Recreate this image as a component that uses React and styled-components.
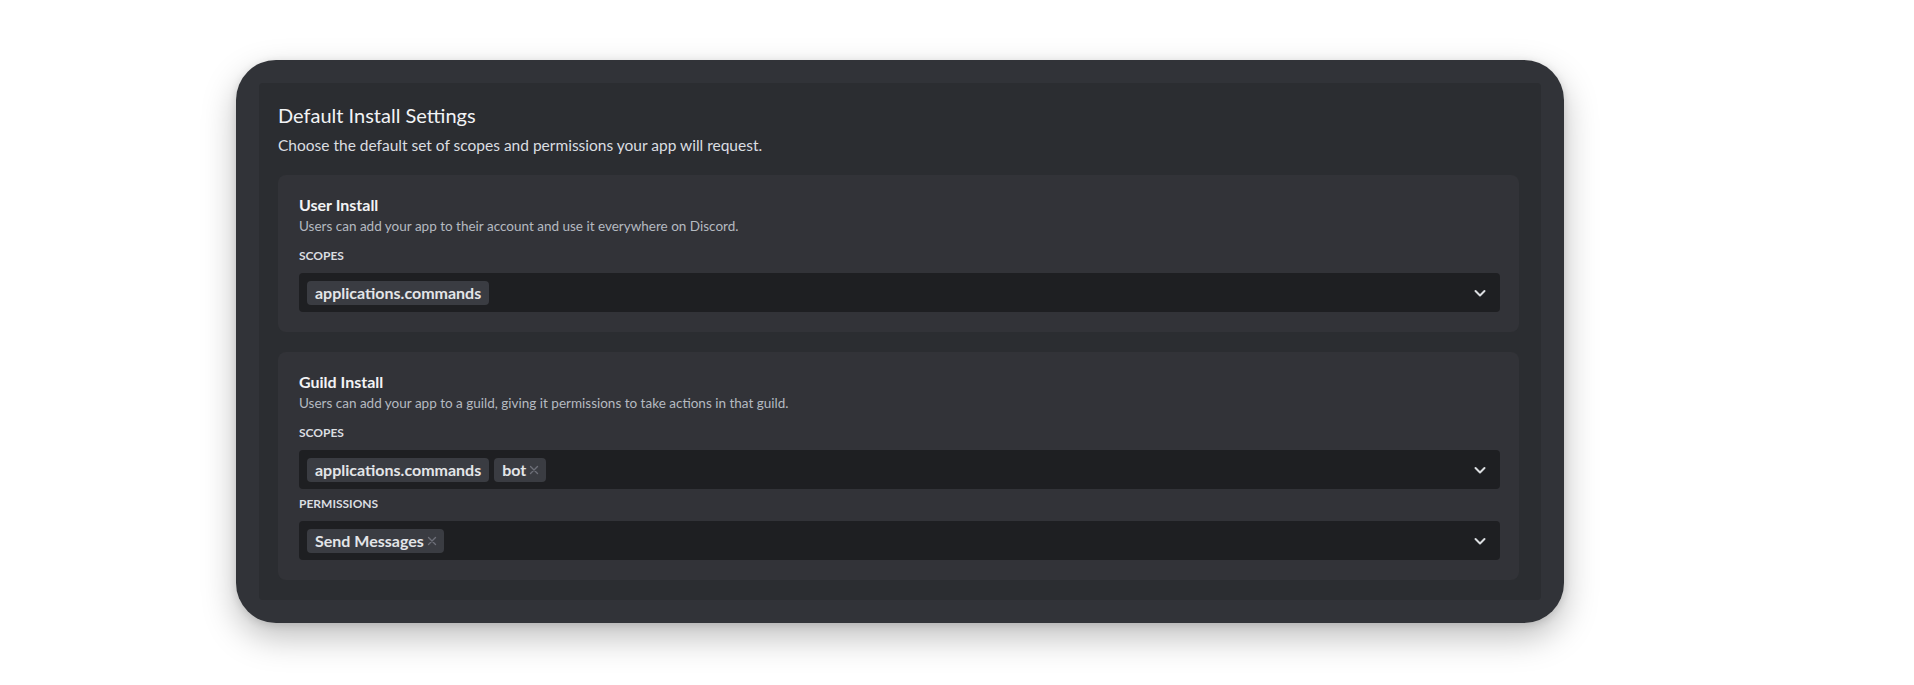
import React from 'react'
import styled, { createGlobalStyle } from 'styled-components'

const GlobalStyle = createGlobalStyle`
  body {
    margin: 0;
    background: #ffffff;
    font-family: 'Lato', 'Noto Sans', sans-serif;
  }
`

const Page = styled.div`
  min-height: 100vh;
  box-sizing: border-box;
  padding: 60px 0 0 236px;
`

const Frame = styled.div`
  width: 1328px;
  box-sizing: border-box;
  padding: 23px;
  background: #313338;
  border-radius: 40px;
  box-shadow: 0 14px 34px rgba(0, 0, 0, 0.26), 0 2px 8px rgba(0, 0, 0, 0.12);
`

const Panel = styled.section`
  background: #2b2d31;
  border-radius: 4px;
  padding: 20px 22px 20px 19px;
  display: flex;
  flex-direction: column;
`

const Title = styled.h2`
  margin: 0;
  font-size: 20px;
  line-height: 24px;
  font-weight: 400;
  color: #f2f3f5;
`

const Subtitle = styled.p`
  margin: 8px 0 20px;
  font-size: 15.5px;
  line-height: 20px;
  color: #dbdee1;
`

const Card = styled.div`
  background: #323338;
  border-radius: 8px;
  padding: 20px 19px 20px 21px;
  display: flex;
  flex-direction: column;
  & + & {
    margin-top: 20px;
  }
`

const CardTitle = styled.h3`
  margin: 0;
  font-size: 16px;
  line-height: 20px;
  font-weight: 700;
  color: #f2f3f5;
`

const CardText = styled.p`
  margin: 2px 0 0;
  font-size: 13.5px;
  line-height: 18px;
  color: #b5bac1;
`

const Label = styled.div`
  margin-top: ${(p) => (p.$first ? '13px' : '7px')};
  margin-bottom: 9px;
  font-size: 12px;
  line-height: 16px;
  font-weight: 700;
  text-transform: uppercase;
  color: #dbdee1;
`

const Select = styled.div`
  height: 39px;
  box-sizing: border-box;
  background: #1e1f22;
  border-radius: 4px;
  padding: 0 13px 0 8px;
  display: flex;
  align-items: center;
  gap: 5px;
`

const Tag = styled.span`
  height: 24px;
  box-sizing: border-box;
  padding: 0 ${(p) => (p.$removable ? '6px' : '8px')} 0 8px;
  display: inline-flex;
  align-items: center;
  gap: 2px;
  background: #3a3c42;
  border-radius: 4px;
  font-size: 16px;
  font-weight: 700;
  color: #e3e5e8;
`

const Remove = styled.svg`
  width: 12px;
  height: 12px;
  color: #6d6f78;
`

const Chevron = styled.svg`
  margin-left: auto;
  width: 14px;
  height: 14px;
  color: #dbdee1;
`

const CloseIcon = () => (
  <Remove viewBox='0 0 12 12' fill='none'>
    <path d='M2.5 2.5l7 7M9.5 2.5l-7 7' stroke='currentColor' strokeWidth='1.4' strokeLinecap='round' />
  </Remove>
)

const Dropdown = ({ tags }) => (
  <Select>
    {tags.map((t) => (
      <Tag key={t.name} $removable={t.removable}>
        {t.name}
        {t.removable && <CloseIcon />}
      </Tag>
    ))}
    <Chevron viewBox='0 0 14 14' fill='none'>
      <path d='M2.5 5l4.5 4.5L11.5 5' stroke='currentColor' strokeWidth='2' strokeLinecap='round' strokeLinejoin='round' />
    </Chevron>
  </Select>
)

const App = () => {
  return (
    <>
      <GlobalStyle />
      <Page>
        <Frame>
          <Panel>
            <Title>Default Install Settings</Title>
            <Subtitle>Choose the default set of scopes and permissions your app will request.</Subtitle>

            <Card>
              <CardTitle>User Install</CardTitle>
              <CardText>Users can add your app to their account and use it everywhere on Discord.</CardText>
              <Label $first>Scopes</Label>
              <Dropdown tags={[{ name: 'applications.commands' }]} />
            </Card>

            <Card>
              <CardTitle>Guild Install</CardTitle>
              <CardText>Users can add your app to a guild, giving it permissions to take actions in that guild.</CardText>
              <Label $first>Scopes</Label>
              <Dropdown tags={[{ name: 'applications.commands' }, { name: 'bot', removable: true }]} />
              <Label>Permissions</Label>
              <Dropdown tags={[{ name: 'Send Messages', removable: true }]} />
            </Card>
          </Panel>
        </Frame>
      </Page>
    </>
  )
}

export default App
